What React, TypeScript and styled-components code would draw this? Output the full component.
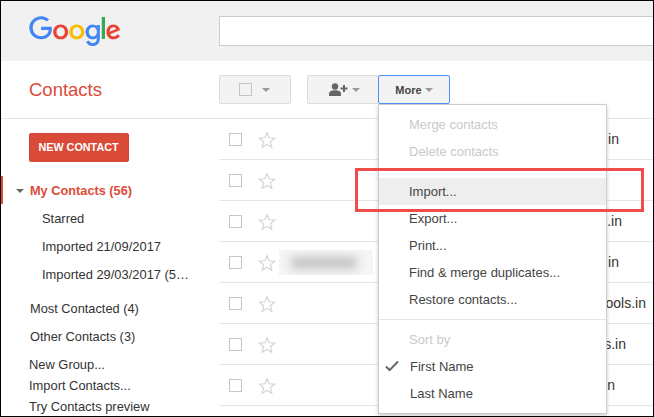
import React from "react";
import styled, { createGlobalStyle } from "styled-components";

const Global = createGlobalStyle`
  html, body { margin: 0; padding: 0; background: #fff; }
  * { box-sizing: border-box; }
`;

const Frame = styled.div`
  position: relative;
  width: 654px;
  height: 417px;
  border: 1px solid #000;
  overflow: hidden;
  background: #fff;
  font-family: "Liberation Sans", Arial, sans-serif;
  font-size: 13px;
  color: #333;
`;

const Header = styled.header`
  display: flex;
  align-items: center;
  height: 60px;
  background: #f1f1f1;
  padding-left: 28px;
`;

const Logo = styled.svg`
  width: 92px;
  height: 31px;
  flex: none;
  margin-top: 1px;
`;

const Search = styled.div`
  flex: none;
  width: 440px;
  height: 30px;
  margin-left: 98px;
  background: #fff;
  border: 1px solid #ccc;
`;

const Toolbar = styled.div`
  display: flex;
  align-items: center;
  height: 58px;
  border-bottom: 1px solid #e5e5e5;
`;

const Title = styled.div`
  width: 218px;
  padding-left: 28px;
  font-size: 18.5px;
  color: #dd4b39;
`;

const Tool = styled.button<{ $active?: boolean; $w: number; $ml?: number; $pl?: number; $pr?: number }>`
  display: flex;
  align-items: center;
  justify-content: center;
  width: ${(p) => p.$w}px;
  height: 29px;
  margin-left: ${(p) => p.$ml ?? 0}px;
  padding: 0 ${(p) => p.$pr ?? 0}px 0 ${(p) => p.$pl ?? 0}px;
  border: 1px solid ${(p) => (p.$active ? "#4d90fe" : "#dcdcdc")};
  border-radius: 2px;
  background: #f3f3f3;
  font: bold 11px "Liberation Sans", Arial, sans-serif;
  color: #444;
  position: relative;
  z-index: ${(p) => (p.$active ? 1 : 0)};
`;

const ToolBox = styled.span`
  width: 13px;
  height: 13px;
  border: 1px solid #c6c6c6;
  margin-right: 10px;
`;

const Caret = styled.span<{ $ml?: number }>`
  width: 0;
  height: 0;
  margin-left: ${(p) => p.$ml ?? 0}px;
  border-left: 4px solid transparent;
  border-right: 4px solid transparent;
  border-top: 4px solid #9a9a9a;
`;

const Body = styled.div`
  display: flex;
`;

const Sidebar = styled.aside`
  width: 218px;
  flex: none;
  padding-top: 14px;
`;

const NewButton = styled.button`
  display: block;
  width: 100px;
  height: 29px;
  margin-left: 28px;
  border: 1px solid #d14836;
  border-radius: 2px;
  background: #d94b38;
  color: #fff;
  padding: 0 1px 2px 0;
  font: bold 10.8px "Liberation Sans", Arial, sans-serif;
`;

const NavItem = styled.div<{ $level?: number; $gap?: number }>`
  height: 28px;
  line-height: 30px;
  padding-left: ${(p) => (p.$level ? 41 : 29)}px;
  margin-top: ${(p) => p.$gap ?? 0}px;
  font-size: ${(p) => (p.$level ? 12.9 : 12.8)}px;
  color: #333;
  white-space: nowrap;
`;

const ActiveItem = styled.div`
  display: flex;
  align-items: center;
  height: 28px;
  margin-top: 14px;
  border-left: 2px solid #dd4b39;
  padding: 1px 0 0 12px;
  color: #dd4b39;
  font-weight: bold;
  font-size: 12.75px;
`;

const NavCaret = styled.span`
  width: 0;
  height: 0;
  margin: 0 6px 0 1px;
  border-left: 4px solid transparent;
  border-right: 4px solid transparent;
  border-top: 4px solid #666;
`;

const Links = styled.div`
  margin-top: 4px;
  padding-left: 28px;
`;

const LinkItem = styled.div`
  height: 21px;
  line-height: 22px;
  font-size: 12.9px;
  color: #333;
  white-space: nowrap;
`;

const List = styled.main`
  flex: 1;
`;

const Row = styled.div`
  position: relative;
  display: flex;
  align-items: center;
  height: 41px;
  border-bottom: 1px solid #e5e5e5;
  padding-left: 10px;
`;

const RowCheck = styled.span`
  width: 13px;
  height: 13px;
  border: 1px solid #c6c6c6;
`;

const Star = styled.svg`
  width: 18px;
  height: 18px;
  margin: 1px 0 0 16px;
  flex: none;
`;

const Email = styled.span<{ $right: number }>`
  margin-left: auto;
  padding-right: ${(p) => p.$right}px;
  font-size: 14px;
  color: #333;
`;

const Blurred = styled.div`
  position: absolute;
  left: 60px;
  top: 8px;
  width: 94px;
  height: 25px;
  background: #f5f5f5;
  overflow: hidden;

  &::after {
    content: "";
    position: absolute;
    left: 12px;
    top: 7px;
    width: 66px;
    height: 12px;
    background: #c4c4c4;
    filter: blur(5px);
  }
`;

const Menu = styled.div`
  position: absolute;
  left: 377px;
  top: 103px;
  width: 229px;
  height: 310px;
  padding-top: 6px;
  background: #fff;
  border: 1px solid #ccc;
  box-shadow: 0 2px 4px rgba(0, 0, 0, 0.2);
  z-index: 2;
`;

const MenuItem = styled.div<{ $disabled?: boolean; $hot?: boolean; $pad?: number }>`
  position: relative;
  height: 27px;
  line-height: 27px;
  padding-left: ${(p) => p.$pad ?? 30}px;
  font-size: 13px;
  white-space: nowrap;
  color: ${(p) => (p.$disabled ? "#c9c9c9" : "#444")};
  background: ${(p) => (p.$hot ? "#eeeeee" : "transparent")};
`;

const MenuGap = styled.div`
  height: 13px;
`;

const MenuRule = styled.div`
  height: 1px;
  margin: 6px 0 6px;
  background: #e5e5e5;
`;

const Check = styled.svg`
  position: absolute;
  left: 6px;
  top: 7px;
  width: 14px;
  height: 12px;
`;

const Callout = styled.div`
  position: absolute;
  left: 354px;
  top: 167px;
  width: 289px;
  height: 44px;
  border: 3px solid #ef4c4a;
  z-index: 3;
`;

const Google = () => (
  <Logo viewBox="0 0 272 92" aria-label="Google">
    <path fill="#EA4335" d="M115.75 47.18c0 12.77-9.99 22.18-22.25 22.18s-22.25-9.41-22.25-22.18C71.25 34.32 81.24 25 93.5 25s22.25 9.32 22.25 22.18zm-9.74 0c0-7.98-5.79-13.44-12.51-13.44S80.99 39.2 80.99 47.18c0 7.9 5.79 13.44 12.51 13.44s12.51-5.55 12.51-13.44z" />
    <path fill="#FBBC05" d="M163.75 47.18c0 12.77-9.99 22.18-22.25 22.18s-22.25-9.41-22.25-22.18c0-12.85 9.99-22.18 22.25-22.18s22.25 9.32 22.25 22.18zm-9.74 0c0-7.98-5.79-13.44-12.51-13.44s-12.51 5.46-12.51 13.44c0 7.9 5.79 13.44 12.51 13.44s12.51-5.55 12.51-13.44z" />
    <path fill="#4285F4" d="M209.75 26.34v39.82c0 16.38-9.66 23.07-21.08 23.07-10.75 0-17.22-7.19-19.66-13.07l8.48-3.53c1.51 3.61 5.21 7.87 11.17 7.87 7.31 0 11.84-4.51 11.84-13v-3.19h-.34c-2.18 2.69-6.38 5.04-11.68 5.04-11.09 0-21.25-9.66-21.25-22.09 0-12.52 10.16-22.26 21.25-22.26 5.29 0 9.49 2.35 11.68 4.96h.34v-3.61h9.25zm-8.56 20.92c0-7.81-5.21-13.52-11.84-13.52-6.72 0-12.35 5.71-12.35 13.52 0 7.73 5.63 13.36 12.35 13.36 6.63 0 11.84-5.63 11.84-13.36z" />
    <path fill="#34A853" d="M225 3v65h-9.5V3h9.5z" />
    <path fill="#EA4335" d="M262.02 54.48l7.56 5.04c-2.44 3.61-8.32 9.83-18.48 9.83-12.6 0-22.01-9.74-22.01-22.18 0-13.19 9.49-22.18 20.92-22.18 11.51 0 17.14 9.16 18.98 14.11l1.01 2.52-29.65 12.28c2.27 4.45 5.8 6.72 10.75 6.72 4.96 0 8.4-2.44 10.92-6.14zm-23.27-7.98l19.82-8.23c-1.09-2.77-4.37-4.7-8.23-4.7-4.95 0-11.84 4.37-11.59 12.93z" />
    <path fill="#4285F4" d="M35.29 41.41V32H67c.31 1.64.47 3.58.47 5.68 0 7.06-1.93 15.79-8.15 22.01-6.05 6.3-13.78 9.66-24.02 9.66C16.32 69.35.36 53.89.36 34.91.36 15.93 16.32.47 35.3.47c10.5 0 17.98 4.12 23.6 9.49l-6.64 6.64c-4.03-3.78-9.49-6.72-16.97-6.72-13.86 0-24.7 11.17-24.7 25.03 0 13.86 10.84 25.03 24.7 25.03 8.99 0 14.11-3.61 17.39-6.89 2.66-2.66 4.41-6.46 5.1-11.65l-22.49.01z" />
  </Logo>
);

const StarIcon = () => (
  <Star viewBox="0 0 18 18">
    <path d="M9 1.6l2.1 5.2 5.6.4-4.3 3.6 1.4 5.5L9 13.3l-4.8 3 1.4-5.5-4.3-3.6 5.6-.4z" fill="none" stroke="#d2d2d2" strokeWidth="1.1" />
  </Star>
);

const rows: { email?: string; right: number; blur?: boolean }[] = [
  { email: "in", right: 34 },
  { right: 0 },
  { email: "ss.in", right: 31 },
  { email: "s.in", right: 34, blur: true },
  { email: "tools.in", right: 7 },
  { email: "ss.in", right: 27 },
  { email: "in", right: 38 },
];

export default function App() {
  return (
    <Frame>
      <Global />
      <Header>
        <Google />
        <Search />
      </Header>
      <Toolbar>
        <Title>Contacts</Title>
        <Tool $w={72} $pr={2}>
          <ToolBox />
          <Caret />
        </Tool>
        <Tool $w={72} $ml={16} $pl={3}>
          <svg width="19" height="13" viewBox="0 0 19 13">
            <circle cx="6" cy="3.5" r="3.2" fill="#666" />
            <path d="M0 13v-2.4C0 8.4 2.8 7.2 6 7.2s6 1.2 6 3.4V13z" fill="#666" />
            <path d="M15 2v7M11.5 5.5h7" stroke="#666" strokeWidth="2" />
          </svg>
          <Caret $ml={4} />
        </Tool>
        <Tool $w={72} $active $ml={-1}>
          More
          <Caret $ml={3} />
        </Tool>
      </Toolbar>
      <Body>
        <Sidebar>
          <NewButton>NEW CONTACT</NewButton>
          <ActiveItem>
            <NavCaret />
            My Contacts (56)
          </ActiveItem>
          <NavItem $level={1}>Starred</NavItem>
          <NavItem $level={1}>Imported 21/09/2017</NavItem>
          <NavItem $level={1}>Imported 29/03/2017 (5…</NavItem>
          <NavItem $gap={6}>Most Contacted (4)</NavItem>
          <NavItem>Other Contacts (3)</NavItem>
          <Links>
            <LinkItem>New Group...</LinkItem>
            <LinkItem>Import Contacts...</LinkItem>
            <LinkItem>Try Contacts preview</LinkItem>
          </Links>
        </Sidebar>
        <List>
          {rows.map((r, i) => (
            <Row key={i}>
              <RowCheck />
              <StarIcon />
              {r.blur && <Blurred />}
              {r.email && <Email $right={r.right}>{r.email}</Email>}
            </Row>
          ))}
        </List>
      </Body>
      <Menu>
        <MenuItem $disabled>Merge contacts</MenuItem>
        <MenuItem $disabled>Delete contacts</MenuItem>
        <MenuGap />
        <MenuItem $hot>Import...</MenuItem>
        <MenuItem>Export...</MenuItem>
        <MenuItem>Print...</MenuItem>
        <MenuItem>Find &amp; merge duplicates...</MenuItem>
        <MenuItem>Restore contacts...</MenuItem>
        <MenuRule />
        <MenuItem $disabled>Sort by</MenuItem>
        <MenuItem $pad={31}>
          <Check viewBox="0 0 14 12">
            <path d="M1 6.5l3.6 3.6L13 1.5" fill="none" stroke="#666" strokeWidth="2" />
          </Check>
          First Name
        </MenuItem>
        <MenuItem $pad={31}>Last Name</MenuItem>
      </Menu>
      <Callout />
    </Frame>
  );
}
